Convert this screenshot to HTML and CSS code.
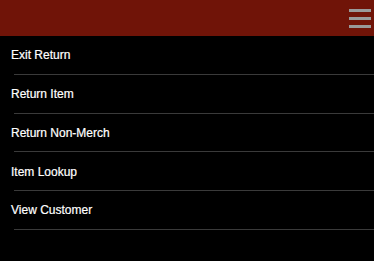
FILE: index.html
```html
<!DOCTYPE html>
<html lang="en">

<head>
    <meta charset="UTF-8">
    <meta name="viewport" content="width=device-width, initial-scale=1.0">
    <title>Return Menu</title>
    <link rel="stylesheet" href="styles.css">
</head>

<body>

    <!-- Top bar -->
    <header class="top-bar">
        <button type="button" class="menu-toggle" aria-label="Menu">
            <span></span>
            <span></span>
            <span></span>
        </button>
    </header>

    <!-- Menu list -->
    <ul class="menu-list">
        <li><a href="#">Exit Return</a></li>
        <li><a href="#">Return Item</a></li>
        <li><a href="#">Return Non-Merch</a></li>
        <li><a href="#">Item Lookup</a></li>
        <li><a href="#">View Customer</a></li>
    </ul>

</body>

</html>
```

FILE: styles.css
```css
/* Reset */
* {
    margin: 0;
    padding: 0;
    box-sizing: border-box;
    font-family: "Liberation Sans", Arial, sans-serif;
}

body {
    background: #000;
    color: #fff;
}

/* Top bar */
.top-bar {
    height: 36px;
    background: #701408;
    display: flex;
    justify-content: flex-end;
    align-items: flex-start;
    padding: 9px 3px 0 0;
}

.menu-toggle {
    width: 22px;
    display: flex;
    flex-direction: column;
    gap: 5px;
    background: none;
    border: none;
    cursor: pointer;
}

.menu-toggle span {
    display: block;
    height: 3px;
    background: #9a9a9a;
}

/* Menu */
.menu-list {
    list-style: none;
}

.menu-list li {
    height: 38.75px;
    margin-left: 14px;
    border-bottom: 1px solid #3a3a3a;
    display: flex;
    align-items: center;
}

.menu-list a {
    margin-left: -3px;
    padding-top: 1px;
    color: #fff;
    text-decoration: none;
    font-size: 12px;
    -webkit-text-stroke: 0.2px #fff;
}
```
